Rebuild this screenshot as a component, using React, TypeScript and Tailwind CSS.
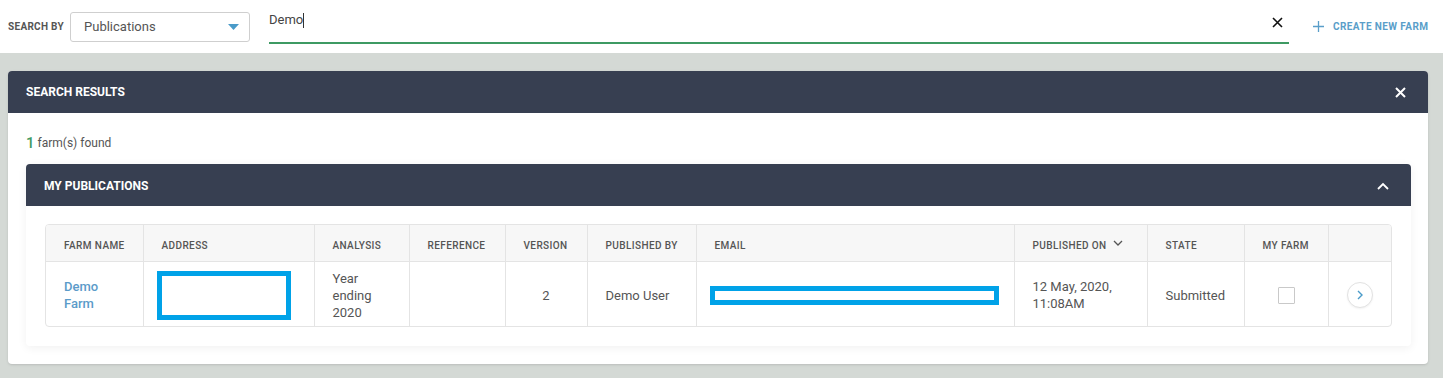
import React from 'react';

const font = { fontFamily: 'Roboto, "Liberation Sans", sans-serif' };

const cols = [98, 171, 95, 96, 82, 109, 318, 133, 97, 84, 64];

const headers = [
  'Farm name',
  'Address',
  'Analysis',
  'Reference',
  'Version',
  'Published by',
  'Email',
  'Published on',
  'State',
  'My farm',
  '',
];

const App: React.FC = () => {
  return (
    <div className="w-[1443px] h-[378px] bg-[#d4d9d5] overflow-hidden" style={font}>
      {/* Top search bar */}
      <div className="h-[53px] bg-white flex items-center pl-2">
        <span className="shrink-0 whitespace-nowrap text-[10px] font-bold text-[#555] tracking-[0.03em] mr-[6px]">SEARCH BY</span>
        <div className="shrink-0 w-[180px] h-[30px] border border-[#cfcfcf] rounded-[3px] flex items-center justify-between pl-[13px] pr-[10px]">
          <span className="text-[13px] text-[#555]">Publications</span>
          <svg width="11" height="6" viewBox="0 0 11 6">
            <path d="M0 0 L11 0 L5.5 6 Z" fill="#4a9bc9" />
          </svg>
        </div>
        <div className="shrink-0 self-start ml-[19px] w-[1020px] h-[44px] border-b-2 border-[#3e9a63] flex items-start justify-between pt-[12px] pr-[6px]">
          <span className="text-[13px] text-[#444] leading-[16px]">
            Demo<span className="inline-block w-px h-[15px] bg-[#333] align-middle" />
          </span>
          <svg width="11" height="11" viewBox="0 0 11 11" className="mt-[5px]">
            <path d="M1 1 L10 10 M10 1 L1 10" stroke="#111" strokeWidth="1.6" />
          </svg>
        </div>
        <div className="shrink-0 whitespace-nowrap ml-[24px] flex items-center gap-[9px] text-[#5a9ec9]">
          <svg width="11" height="11" viewBox="0 0 11 11">
            <path d="M5.5 0 V11 M0 5.5 H11" stroke="#5a9ec9" strokeWidth="1.3" />
          </svg>
          <span className="text-[10px] font-bold tracking-[0.04em]">CREATE NEW FARM</span>
        </div>
      </div>

      {/* Search results card */}
      <div className="pl-2 pr-[15px] pt-[18px]">
        <div className="bg-white rounded-[4px] shadow-sm">
          <div className="h-[42px] bg-[#373f51] rounded-t-[4px] flex items-center justify-between pl-[18px] pr-[22px]">
            <span className="text-[12px] font-bold text-white">SEARCH RESULTS</span>
            <svg width="11" height="11" viewBox="0 0 11 11">
              <path d="M1 1 L10 10 M10 1 L1 10" stroke="#fff" strokeWidth="2" />
            </svg>
          </div>
          <div className="px-[18px] pt-[19px] pb-[18px] pr-[17px]">
            <div className="h-[20px] flex items-end mb-[12px]">
              <span className="text-[15px] font-medium text-[#3f9b62] leading-[18px] mr-[3px]">1</span>
              <span className="text-[12px] text-[#555] leading-[17px]">farm(s) found</span>
            </div>

            {/* My publications */}
            <div className="bg-white rounded-[4px] shadow-[0_2px_10px_rgba(0,0,0,0.06)]">
              <div className="h-[42px] bg-[#373f51] rounded-t-[4px] flex items-center justify-between pl-[18px] pr-[22px] pt-px">
                <span className="text-[12px] font-bold text-white">MY PUBLICATIONS</span>
                <svg width="12" height="8" viewBox="0 0 12 8">
                  <path d="M1 7 L6 2 L11 7" stroke="#fff" strokeWidth="1.8" fill="none" />
                </svg>
              </div>
              <div className="p-[18px] pl-[19px] pr-[19px] pb-[19px]">
                <div className="border border-[#e4e4e4] rounded-[4px] overflow-hidden">
                  <table className="table-fixed border-collapse w-[1345px]">
                    <colgroup>
                      {cols.map((w, i) => (
                        <col key={i} style={{ width: i === 0 ? w - 1 : i === cols.length - 1 ? w - 1 : w }} />
                      ))}
                    </colgroup>
                    <thead>
                      <tr className="h-[36px] bg-[#f7f7f7]">
                        {headers.map((h, i) => (
                          <th
                            key={i}
                            className={`text-left font-medium text-[10px] uppercase tracking-[0.04em] text-[#555] pl-[18px] pt-[6px] border-b border-[#e4e4e4] ${
                              i > 0 ? 'border-l' : ''
                            }`}
                          >
                            {h === 'Published on' ? (
                              <span className="inline-flex items-center gap-[6px]">
                                {h}
                                <svg width="10" height="6" viewBox="0 0 10 6" className="-mt-[5px]">
                                  <path d="M1 1 L5 5 L9 1" stroke="#555" strokeWidth="1.3" fill="none" />
                                </svg>
                              </span>
                            ) : (
                              h
                            )}
                          </th>
                        ))}
                      </tr>
                    </thead>
                    <tbody>
                      <tr className="h-[65px] text-[13px] text-[#555] leading-[17px] [&>td]:pt-[3px]">
                        <td className="pl-[18px] pr-2 text-[#5b9bc9] font-medium">
                          Demo
                          <br />
                          Farm
                        </td>
                        <td className="border-l border-[#e4e4e4] pl-[13px]">
                          <div className="w-[134px] h-[49px] border-[5px] border-[#00a2e8]" />
                        </td>
                        <td className="border-l border-[#e4e4e4] pl-[18px]">
                          Year
                          <br />
                          ending
                          <br />
                          2020
                        </td>
                        <td className="border-l border-[#e4e4e4]" />
                        <td className="border-l border-[#e4e4e4] text-center">2</td>
                        <td className="border-l border-[#e4e4e4] pl-[18px]">Demo User</td>
                        <td className="border-l border-[#e4e4e4] pl-[13px]">
                          <div className="w-[289px] h-[19px] border-[5px] border-[#00a2e8]" />
                        </td>
                        <td className="border-l border-[#e4e4e4] pl-[18px]">
                          12 May, 2020,
                          <br />
                          11:08AM
                        </td>
                        <td className="border-l border-[#e4e4e4] pl-[18px]">Submitted</td>
                        <td className="border-l border-[#e4e4e4]">
                          <div className="mx-auto w-[17px] h-[17px] border border-[#c9c9c9] rounded-[1px] bg-white" />
                        </td>
                        <td className="border-l border-[#e4e4e4]">
                          <div className="mx-auto w-[26px] h-[26px] rounded-full border border-[#e2e2e2] bg-white flex items-center justify-center shadow-[0_1px_2px_rgba(0,0,0,0.05)]">
                            <svg width="6" height="10" viewBox="0 0 6 10">
                              <path d="M1 1 L5 5 L1 9" stroke="#4a9bc9" strokeWidth="1.4" fill="none" />
                            </svg>
                          </div>
                        </td>
                      </tr>
                    </tbody>
                  </table>
                </div>
              </div>
            </div>
          </div>
        </div>
      </div>
    </div>
  );
};

export default App;
